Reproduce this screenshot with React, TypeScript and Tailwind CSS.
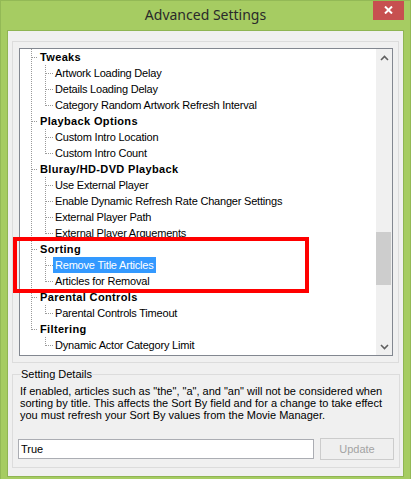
import React from "react";

type Row = {
  label: string;
  level: 0 | 1;
  lastChild?: boolean;
  lastRoot?: boolean;
  underLastRoot?: boolean;
  selected?: boolean;
};

const rows: Row[] = [
  { label: "Tweaks", level: 0 },
  { label: "Artwork Loading Delay", level: 1 },
  { label: "Details Loading Delay", level: 1 },
  { label: "Category Random Artwork Refresh Interval", level: 1, lastChild: true },
  { label: "Playback Options", level: 0 },
  { label: "Custom Intro Location", level: 1 },
  { label: "Custom Intro Count", level: 1, lastChild: true },
  { label: "Bluray/HD-DVD Playback", level: 0 },
  { label: "Use External Player", level: 1 },
  { label: "Enable Dynamic Refresh Rate Changer Settings", level: 1 },
  { label: "External Player Path", level: 1 },
  { label: "External Player Arguements", level: 1, lastChild: true },
  { label: "Sorting", level: 0 },
  { label: "Remove Title Articles", level: 1, selected: true },
  { label: "Articles for Removal", level: 1, lastChild: true },
  { label: "Parental Controls", level: 0 },
  { label: "Parental Controls Timeout", level: 1, lastChild: true },
  { label: "Filtering", level: 0, lastRoot: true },
  { label: "Dynamic Actor Category Limit", level: 1, lastChild: true, underLastRoot: true },
];

const dot = { stroke: "#9a9a9a", strokeWidth: 1, strokeDasharray: "1 1", shapeRendering: "crispEdges" as const };

function TreeLines({ row }: { row: Row }) {
  if (row.level === 0) {
    return (
      <svg width="18" height="16" className="shrink-0">
        <line x1="11.5" y1="0" x2="11.5" y2={row.lastRoot ? 9 : 16} {...dot} />
        <line x1="12" y1="8.5" x2="19" y2="8.5" {...dot} />
      </svg>
    );
  }
  return (
    <svg width="33" height="16" className="shrink-0">
      {!row.underLastRoot && <line x1="11.5" y1="0" x2="11.5" y2="16" {...dot} />}
      <line x1="25.5" y1="0" x2="25.5" y2={row.lastChild ? 9 : 16} {...dot} />
      <line x1="26" y1="8.5" x2="33" y2="8.5" {...dot} />
    </svg>
  );
}

function Chevron({ down }: { down?: boolean }) {
  return (
    <svg width="9" height="6" viewBox="0 0 9 6">
      <path
        d={down ? "M1 1 L4.5 4.5 L8 1" : "M1 5 L4.5 1.5 L8 5"}
        fill="none"
        stroke="#606060"
        strokeWidth="1.6"
      />
    </svg>
  );
}

export default function App() {
  return (
    <div
      className="relative w-[411px] h-[479px] bg-[#a6cc62] border-x border-t border-[#93b956] flex flex-col overflow-hidden"
      style={{ fontFamily: '"Liberation Sans", Arial, sans-serif' }}
    >
      {/* Title bar */}
      <div className="h-[30px] grid grid-cols-[1fr_auto_1fr] items-start">
        <div />
        <div
          className="pt-[4px] text-[14px] leading-[20px] text-[#2a2a2a]"
          style={{ fontFamily: '"Noto Sans", sans-serif' }}
        >
          Advanced Settings
        </div>
        <div className="flex justify-end pr-[6px]">
          <div className="w-[31px] h-[20px] -mt-px bg-[#c75050] flex items-center justify-center">
            <svg width="9" height="8" viewBox="0 0 9 8">
              <path d="M1 0.5 L8 7.5 M8 0.5 L1 7.5" stroke="#ffffff" strokeWidth="2" />
            </svg>
          </div>
        </div>
      </div>

      {/* Client area */}
      <div className="mx-[7px] h-[445px] bg-[#f0f0f0] shadow-[0_0_0_1px_#8fb553] flex flex-col text-[11px] text-black">
        {/* Tree panel */}
        <div className="mt-[10px] mx-[4px] h-[322px] border border-[#dcdcdc] pl-[6px] pr-[5px] pt-[6px]">
          <div className="h-[308px] border border-[#828790] bg-white flex">
            <div className="flex-1 flex flex-col">
              {rows.map((row) => (
                <div key={row.label} className="h-[16px] flex items-center whitespace-nowrap">
                  <TreeLines row={row} />
                  <span
                    className={`px-[2px] h-[16px] leading-[16px] ${
                      row.level === 0 ? "font-bold tracking-[0.35px]" : "tracking-[-0.2px]"
                    } ${row.selected ? "bg-[#3399ff] text-white" : ""}`}
                  >
                    {row.label}
                  </span>
                </div>
              ))}
            </div>
            <div className="w-[16px] bg-[#f0f0f0] flex flex-col">
              <div className="h-[17px] flex items-center justify-center">
                <Chevron />
              </div>
              <div className="flex-1">
                <div className="mt-[166px] h-[53px] w-[15px] bg-[#cdcdcd]" />
              </div>
              <div className="h-[17px] flex items-center justify-center">
                <Chevron down />
              </div>
            </div>
          </div>
        </div>

        {/* Setting Details */}
        <fieldset className="mt-[5px] mx-[4px] border border-[#dcdcdc] pl-[5px] pr-[5px] pb-[7px]">
          <legend className="ml-[3px] leading-[13px] text-[11px]">Setting Details</legend>
          <p className="mt-[4px] ml-[2px] leading-[12px]">
            If enabled, articles such as "the", "a", and "an" will not be considered when
            <br />
            sorting by title. This affects the Sort By field and for a change to take effect
            <br />
            you must refresh your Sort By values from the Movie Manager.
          </p>
          <div className="mt-[17px] h-[22px] flex items-center gap-[6px]">
            <div className="w-[296px] h-[20px] border border-[#abadb3] bg-white pl-[2px] leading-[18px]">
              True
            </div>
            <div className="w-[74px] h-[22px] border border-[#cccccc] bg-[#efefef] text-[#a3a3a3] flex items-center justify-center">
              Update
            </div>
          </div>
        </fieldset>
      </div>

      {/* Annotation */}
      <div className="absolute left-[12px] top-[236px] w-[296px] h-[56px] border-[4px] border-[#ff0000]" />
    </div>
  );
}
